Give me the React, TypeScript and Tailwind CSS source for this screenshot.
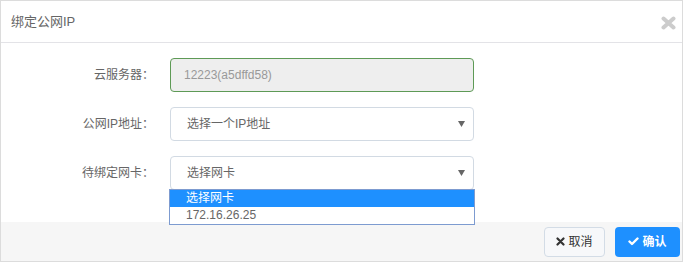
import React from "react";

const FONT = { fontFamily: '"Liberation Sans", "Noto Sans CJK SC", sans-serif' };

function Caret() {
  return (
    <svg width="7" height="6" viewBox="0 0 7 6" className="absolute right-[9px] top-[14px]">
      <path d="M0 0 H7 L3.5 6 Z" fill="#666" />
    </svg>
  );
}

function Row({ label, children }: { label: string; children: React.ReactNode }) {
  return (
    <div className="flex items-center h-[34px]">
      <div className="w-[155px] text-right text-[12px] text-[#666] pr-[2px]">{label}</div>
      <div className="ml-[14px] w-[304px] h-[34px] relative">{children}</div>
    </div>
  );
}

export default function App() {
  return (
    <div style={FONT} className="w-[683px] h-[262px] border border-[#dcdcdc] bg-white flex flex-col relative overflow-hidden">
      <div className="h-[42px] border-b border-[#e3e3e7] flex items-center justify-between pl-[10px] pr-[6px] shrink-0">
        <span className="text-[13px] text-[#666]">绑定公网IP</span>
        <svg width="15" height="14" viewBox="0 0 15 14" className="mt-[2px]">
          <path d="M2.5 2.5 L12.5 11.5 M12.5 2.5 L2.5 11.5" stroke="#cccccc" strokeWidth="4" strokeLinecap="round" />
        </svg>
      </div>
      <div className="flex-1 flex flex-col gap-[15px] pt-[15px]">
        <Row label="云服务器：">
          <div className="h-full rounded-[4px] border border-[#5e9a56] bg-[#eeeeee] flex items-center pl-[13px] text-[12px] text-[#999]">
            12223(a5dffd58)
          </div>
        </Row>
        <Row label="公网IP地址：">
          <div className="h-full rounded-[4px] border border-[#d2dae3] bg-white flex items-center pl-[16px] text-[12px] text-[#666]">
            选择一个IP地址
          </div>
          <Caret />
        </Row>
        <Row label="待绑定网卡：">
          <div className="h-full rounded-[4px] border border-[#d2dae3] bg-white flex items-center pl-[16px] text-[12px] text-[#666]">
            选择网卡
          </div>
          <Caret />
          <div className="absolute left-[-1px] top-[33px] w-[306px] border border-[#7d9bd0] bg-white z-10 text-[12px]">
            <div className="h-[17px] bg-[#1e90ff] text-white pl-[16px] leading-[17px]">选择网卡</div>
            <div className="h-[17px] text-[#666] pl-[16px] leading-[17px]">172.16.26.25</div>
          </div>
        </Row>
      </div>
      <div className="h-[39px] bg-[#f6f6f6] flex items-center justify-end gap-[10px] pr-[2px] shrink-0">
        <button className="h-[30px] w-[61px] rounded-[4px] border border-[#d3dce6] bg-[#f7f8fa] flex items-center justify-center gap-[3px] text-[12px] text-[#333]">
          <svg width="9" height="9" viewBox="0 0 9 9">
            <path d="M1.5 1.5 L7.5 7.5 M7.5 1.5 L1.5 7.5" stroke="#333" strokeWidth="2.2" strokeLinecap="round" />
          </svg>
          取消
        </button>
        <button className="h-[30px] w-[65px] rounded-[4px] bg-[#1e90ff] flex items-center justify-center gap-[3px] text-[12px] text-white font-bold">
          <svg width="11" height="9" viewBox="0 0 11 9">
            <path d="M1.5 4.5 L4 7 L9.5 1.5" stroke="#fff" strokeWidth="2.4" fill="none" strokeLinecap="round" strokeLinejoin="round" />
          </svg>
          确认
        </button>
      </div>
    </div>
  );
}
